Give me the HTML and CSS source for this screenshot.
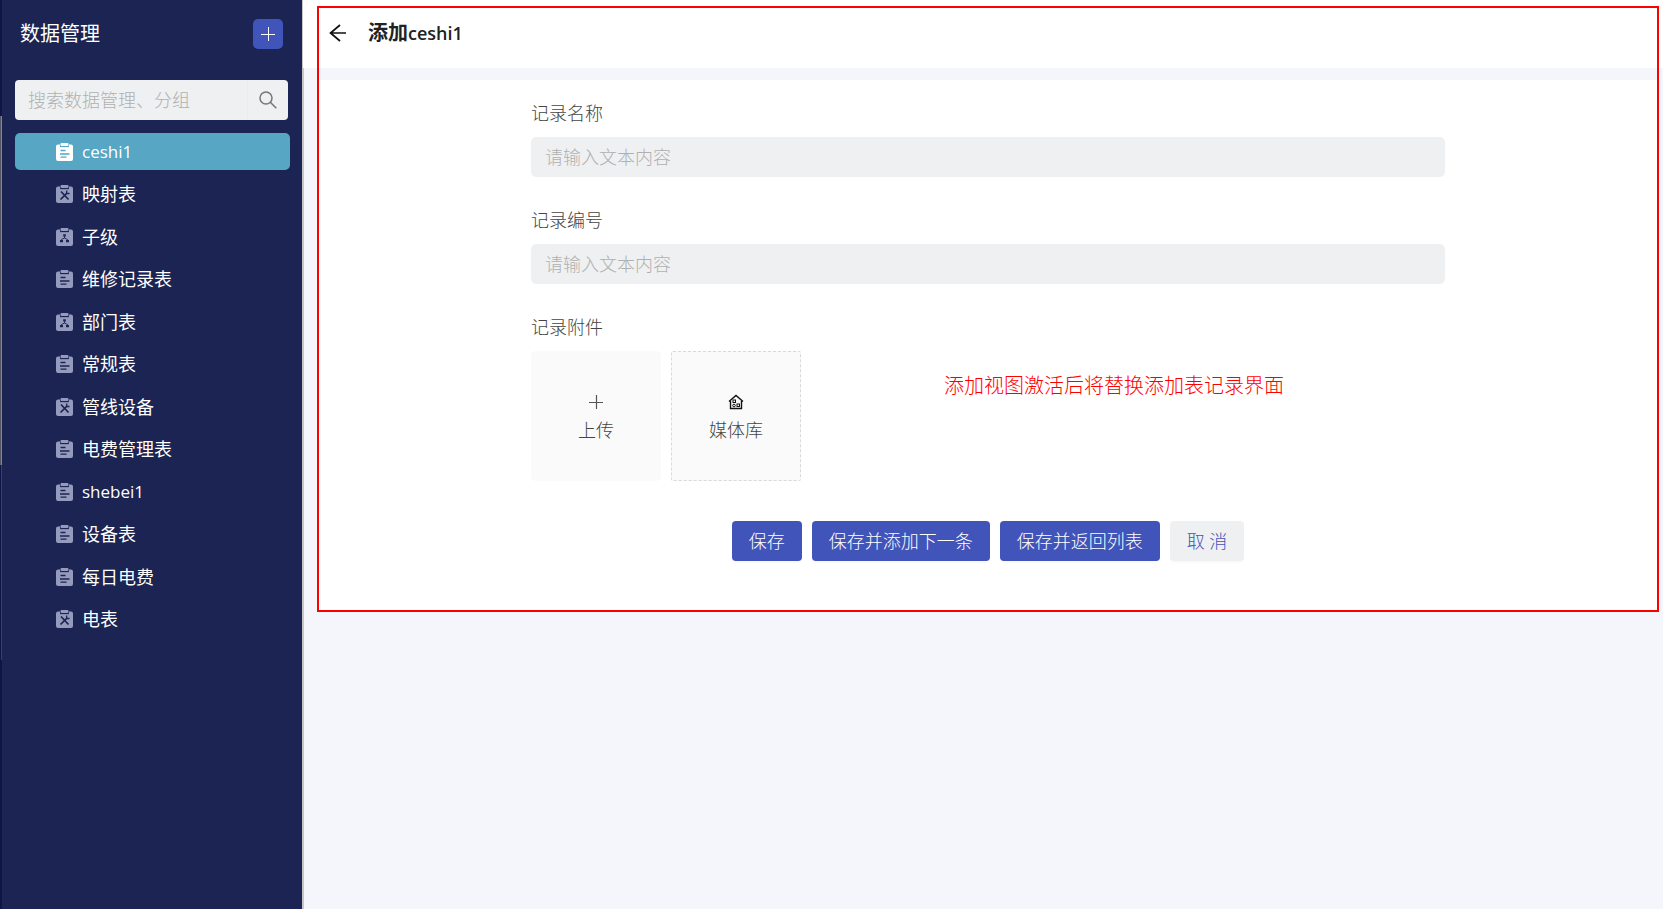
FILE: index.html
```
<!DOCTYPE html>
<html lang="zh-CN">
<head>
<meta charset="utf-8">
<title>数据管理</title>
<link rel="stylesheet" href="styles.css">
</head>
<body>
<svg class="sprite" aria-hidden="true">
  <defs>
    <mask id="cut-form"><rect width="17" height="18" fill="#fff"/><path d="M4 3.700h9" stroke="#000" stroke-width=".7"/><path d="M4.500 7.500h5M4 11h9.500M4.500 14.200h6" stroke="#000" stroke-width="1.300"/></mask>
    <mask id="cut-tool"><rect width="17" height="18" fill="#fff"/><path d="M4 3.700h9" stroke="#000" stroke-width=".7"/><path d="M4.500 14.500l6.500-6.500M5 6.500l7.500 8" stroke="#000" stroke-width="1.700"/><path d="M10.800 5.500l-.3 3 3 0" stroke="#000" stroke-width="1.300" fill="none"/></mask>
    <mask id="cut-tree"><rect width="17" height="18" fill="#fff"/><path d="M4 3.700h9" stroke="#000" stroke-width=".7"/><path d="M8.500 7.500v2.500M5.500 13v-1.500l3-1.500 3 1.500v1.500" stroke="#000" stroke-width=".9" fill="none"/><path d="M7.200 6.200h2.600v2.200h-2.600zM4 12h3v2.200h-3zM10 12h3v2.200h-3z"/></mask>
    <path id="board" d="M2 1.500h2v1.500q0 1 1 1h7q1 0 1-1v-1.500h2q2 0 2 2v12.500q0 2-2 2h-13q-2 0-2-2v-12.500q0-2 2-2zM5.500 0h6q1 0 1 1v1q0 1-1 1h-6q-1 0-1-1v-1q0-1 1-1z"/>
  </defs>
  <symbol id="i-form" viewBox="0 0 17 18"><use href="#board" mask="url(#cut-form)"/></symbol>
  <symbol id="i-tool" viewBox="0 0 17 18"><use href="#board" mask="url(#cut-tool)"/></symbol>
  <symbol id="i-tree" viewBox="0 0 17 18"><use href="#board" mask="url(#cut-tree)"/></symbol>
</svg>
<div class="app">
  <div class="rail"><div class="rail-thumb"></div><div class="rail-rest"></div></div>
  <aside class="sidebar">
    <div class="side-head">
      <h1 class="side-title">数据管理</h1>
      <button class="add" type="button" aria-label="新增"><svg width="14" height="14" viewBox="0 0 14 14"><path d="M7.500 0v14M0 7.500h14" stroke="#fff"/></svg></button>
    </div>
    <form class="search">
      <input class="search-input" type="text" placeholder="搜索数据管理、分组" aria-label="搜索数据管理、分组">
      <button class="search-btn" type="button" aria-label="搜索"><svg width="18" height="18" viewBox="0 0 18 18"><circle cx="7" cy="7" r="6" fill="none" stroke="#777" stroke-width="1.500"/><path d="M11.300 11.300l6 6" stroke="#777" stroke-width="1.600"/></svg></button>
    </form>
    <ul class="menu">
      <li><a class="item active latin" href="#"><svg class="ico"><use href="#i-form"/></svg>ceshi1</a></li>
      <li><a class="item" href="#"><svg class="ico"><use href="#i-tool"/></svg>映射表</a></li>
      <li><a class="item" href="#"><svg class="ico"><use href="#i-tree"/></svg>子级</a></li>
      <li><a class="item" href="#"><svg class="ico"><use href="#i-form"/></svg>维修记录表</a></li>
      <li><a class="item" href="#"><svg class="ico"><use href="#i-tree"/></svg>部门表</a></li>
      <li><a class="item" href="#"><svg class="ico"><use href="#i-form"/></svg>常规表</a></li>
      <li><a class="item" href="#"><svg class="ico"><use href="#i-tool"/></svg>管线设备</a></li>
      <li><a class="item" href="#"><svg class="ico"><use href="#i-form"/></svg>电费管理表</a></li>
      <li><a class="item latin" href="#"><svg class="ico"><use href="#i-form"/></svg>shebei1</a></li>
      <li><a class="item" href="#"><svg class="ico"><use href="#i-form"/></svg>设备表</a></li>
      <li><a class="item" href="#"><svg class="ico"><use href="#i-form"/></svg>每日电费</a></li>
      <li><a class="item" href="#"><svg class="ico"><use href="#i-tool"/></svg>电表</a></li>
    </ul>
  </aside>
  <main class="main">
    <div class="view">
      <header class="topbar">
        <button class="back" type="button" aria-label="返回"><svg width="18" height="18" viewBox="0 0 18 18"><path d="M17 9H1.500M11 1L1.500 9l9.500 8" fill="none" stroke="#111" stroke-width="1.700"/></svg></button>
        <h2 class="page-title">添加<span class="title-latin">ceshi1</span></h2>
      </header>
      <section class="panel">
        <form class="form">
          <div class="field">
            <label class="label" for="rec-name">记录名称</label>
            <input class="input" id="rec-name" type="text" placeholder="请输入文本内容">
          </div>
          <div class="field">
            <label class="label" for="rec-no">记录编号</label>
            <input class="input" id="rec-no" type="text" placeholder="请输入文本内容">
          </div>
          <div class="field">
            <span class="label">记录附件</span>
            <div class="tiles">
              <button class="tile" type="button"><svg width="16" height="16" viewBox="0 0 16 16"><path d="M8.500 1v14M1 8.500h14" stroke="#555" stroke-width="1.200"/></svg>上传</button>
              <button class="tile dashed" type="button"><svg width="16" height="16" viewBox="0 0 16 16" fill="none" stroke="#111"><path d="M1 7.500L8 1.500l7 6M2.500 7v7.500h11V7" stroke-width="1.400"/><rect x="5" y="6" width="2.500" height="2.500"/><circle cx="6" cy="11.500" r="1.300"/><rect x="9" y="10" width="2.500" height="2.500"/></svg>媒体库</button>
            </div>
          </div>
          <div class="actions">
            <button class="btn" type="button">保存</button>
            <button class="btn" type="button">保存并添加下一条</button>
            <button class="btn" type="button">保存并返回列表</button>
            <button class="btn plain" type="button">取 消</button>
          </div>
        </form>
      </section>
      <div class="frame"></div>
      <p class="note">添加视图激活后将替换添加表记录界面</p>
    </div>
  </main>
</div>
</body>
</html>
```
FILE: styles.css
```
* { box-sizing: border-box; }
body {
  margin: 0;
  background: #f5f6fb;
  font: 18px/24px "Open Sans", "Noto Sans CJK SC", sans-serif;
}
button, input { font: inherit; border: 0; padding: 0; margin: 0; }
h1, h2, p, ul { margin: 0; padding: 0; }
.sprite { position: absolute; width: 0; height: 0; }
.app { display: flex; min-height: 100vh; }

.rail { width: 2px; background: #0f1646; padding-top: 116px; }
.rail-thumb { height: 349px; background: #55565f; border-right: 1px solid #85868c; }
.rail-rest { height: 195px; border-right: 1px solid #3a4068; }

.sidebar { width: 300px; padding: 19px 12px 19px 13px; background: #1b2452; color: #fff; }
.side-head { display: flex; justify-content: space-between; align-items: center; padding: 0 7px 0 5px; }
.side-title { font-size: 20px; font-weight: 400; line-height: 30px; }
.add { display: grid; place-items: center; width: 30px; height: 30px; border-radius: 5px; background: #4154b9; }
.search { display: flex; margin: 31px 2px 13px 0; border-radius: 4px; overflow: hidden; background: #eff0f2; }
.search-input { flex: 1; min-width: 0; height: 40px; padding: 0 13px; background: transparent; font-weight: 300; }
.search-btn { width: 41px; display: grid; place-items: center; background: transparent; border-left: 1px solid #ebecee; }
::placeholder { color: #b0b0b0; opacity: 1; }
.menu { list-style: none; }
.menu li { margin-bottom: 5px; }
.menu li:nth-child(even) { margin-bottom: 6px; }
.item { display: flex; align-items: center; gap: 9px; height: 37px; padding-left: 41px; border-radius: 5px; color: #fff; text-decoration: none; }
.item.latin { font-size: 17px; }
.item.active { background: #56a6c4; }
.ico { width: 17px; height: 18px; fill: #959bbd; }
.active .ico { fill: #fff; }

.main { flex: 1; min-width: 0; border-left: 2px solid #c6c6c8; }
.view { position: relative; }
.topbar { display: flex; align-items: center; gap: 21px; height: 68px; margin-left: -1px; padding: 0 26px 3px; background: #fff; }
.back { display: flex; background: transparent; }
.page-title { font-size: 20px; font-weight: 700; color: #222; }
.title-latin { font-size: 18px; font-weight: 600; }
.panel { margin: 12px 4px 0 13px; padding: 21px 0 51px; background: #fff; }
.form { width: 68.1%; margin: 0 auto; }
.field { margin-bottom: 31px; }
.label { display: block; margin-bottom: 12px; color: #444; font-weight: 300; }
.input { display: block; width: 100%; height: 40px; padding: 0 14px; border-radius: 5px; background: #eff0f2; font-weight: 300; }
.tiles { display: flex; gap: 10px; }
.tile { display: flex; flex-direction: column; align-items: center; justify-content: center; gap: 8px; width: 130px; height: 130px; padding-top: 4px; border-radius: 5px; background: #fafafa; color: #444; font-weight: 300; }
.tile.dashed { border: 1px dashed #d9d9d9; border-radius: 2px; }
.actions { display: flex; justify-content: center; gap: 10px; margin-top: 40px; }
.btn { height: 40px; padding: 0 17px; border-radius: 4px; background: #4154b9; color: #fff; font-weight: 300; box-shadow: 0 2px 0 rgba(0, 0, 0, .02); }
.btn.plain { background: #eff0f2; color: #4154b9; }
.frame { position: absolute; inset: 6px 4px 0 13px; border: 2px solid #f00; pointer-events: none; }
.note { position: absolute; top: 374px; left: 640px; color: #f00; font-size: 20px; font-weight: 300; }
```
